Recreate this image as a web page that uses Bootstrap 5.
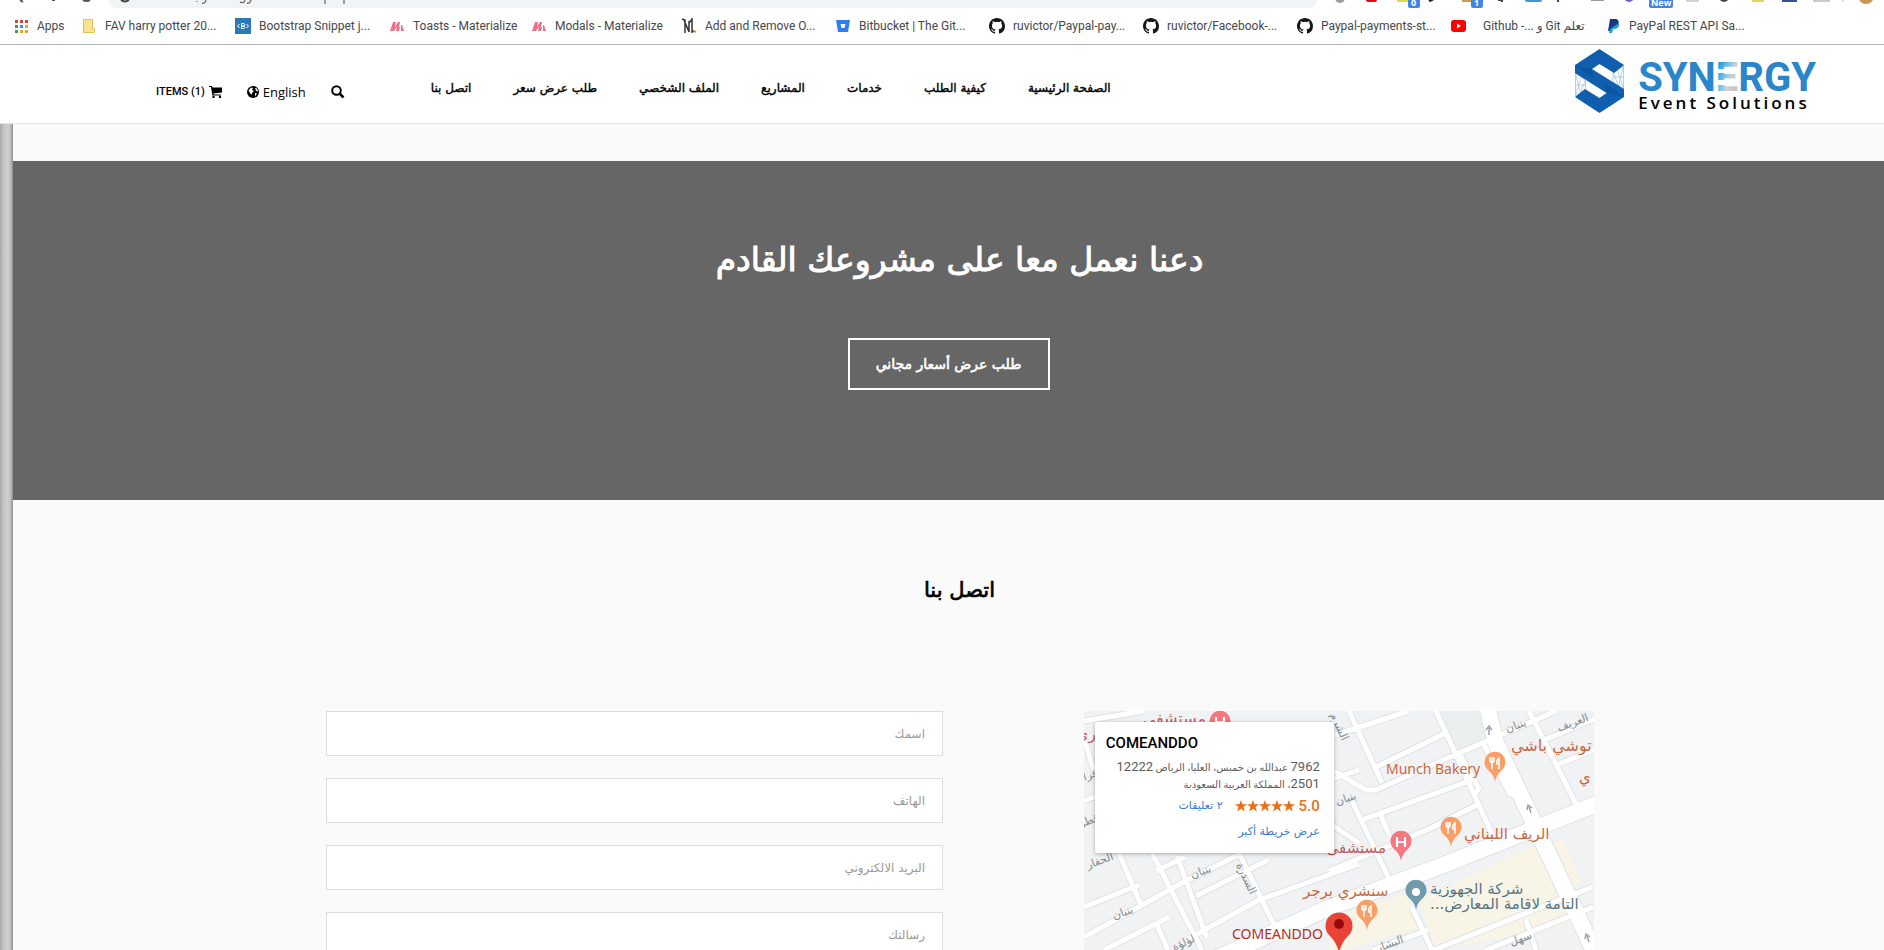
<!DOCTYPE html>
<html lang="ar">
<head>
<meta charset="utf-8">
<meta name="viewport" content="width=device-width, initial-scale=1">
<title>Synergy Event Solutions</title>
<link rel="stylesheet" href="https://cdn.jsdelivr.net/npm/bootstrap@5.3.0/dist/css/bootstrap.min.css">
<script src="https://cdn.jsdelivr.net/npm/bootstrap@5.3.0/dist/js/bootstrap.bundle.min.js"></script>
<style>
  body { background: #fafafa; color: #000; font-family: "DejaVu Sans", sans-serif; }
  a { color: inherit; text-decoration: none; }
  svg { display: block; flex: none; }
  /* browser chrome */
  .toolbar { height: 8px; }
  .omnibox { background: #f1f3f4; border-radius: 0 0 14px 14px; height: 8px; }
  .bookmarks { height: 37px; border-bottom: 1px solid #b4b4b4; font: 12px/16px Roboto, "DejaVu Sans", sans-serif; color: #45484c; padding-left: 13px; }
  .bookmark { width: 154px; flex: none; }
  .bookmark.apps { width: 68px; }
  .bookmark.toasts { width: 142px; }
  .bookmark.modals { width: 150px; }
  .bookmark.paypal { width: 160px; }
  /* site header */
  .site-header { height: 79px; border-bottom: 1px solid #e4e4e4; padding: 0 68px 0 156px; }
  .tools { gap: 25px; padding-top: 16px; font: 13px/20px "Open Sans", sans-serif; }
  .tools .items { font: 500 11px/20px Roboto, sans-serif; }
  .main-nav { gap: 42px; margin-left: 86px; padding-top: 8px; font-size: 12px; line-height: 20px; -webkit-text-stroke: 0.4px #000; }
  .brand { padding-bottom: 6px; gap: 14px; }
  .brand-name { font: 700 40px/30px Roboto, sans-serif; color: #2a86c8; padding-top: 14px; }
  .brand-name .bars { background: linear-gradient(110deg, #1b9ad6 15%, #7cc8ea 45%, #d0d0d0 60%, #bdbdbd); -webkit-background-clip: text; background-clip: text; color: transparent; -webkit-mask-image: linear-gradient(#000 15px, transparent 15px 19px, #000 19px 26px, transparent 26px 31px, #000 31px); mask-image: linear-gradient(#000 15px, transparent 15px 19px, #000 19px 26px, transparent 26px 31px, #000 31px); }
  .brand-tag { font: 600 17px/20px "Open Sans", sans-serif; letter-spacing: 3px; }
  /* page */
  .edge { width: 13px; flex: none; background: linear-gradient(90deg, #a8a8a8, #c4c4c4 25%, #cfcfcf 60%, #c0c0c0 80%, #8c8c8c); }
  .cta { margin-top: 37px; height: 339px; background: #666; color: #fff; }
  .cta h1 { font-size: 33px; line-height: 48px; font-weight: 400; padding: 75px 0 0 22px; margin-bottom: 54px; -webkit-text-stroke: 1px #fff; }
  .cta-btn { width: 202px; height: 52px; border: 2px solid #fff; background: transparent; color: #fff; font-size: 14px; -webkit-text-stroke: 0.6px #fff; }
  .contact h2 { font-size: 21px; line-height: 30px; padding: 75px 0 0 22px; margin-bottom: 106px; font-weight: 400; -webkit-text-stroke: 0.7px #000; }
  .contact-row { max-width: 1290px; padding-left: 22px; }
  .contact-form { width: 48.7%; gap: 22px; }
  .contact-form .form-control { height: 45px; border: 1px solid #dcdcdc; border-radius: 0; padding: 10px 17px; font-size: 12px; line-height: 24px; }
  .contact-form textarea.form-control { height: 160px; }
  .contact-form .form-control::placeholder { color: #999; }
  .map { width: 40.2%; height: 450px; background: #f0f2f4; }
  .place-card { top: 11px; left: 11px; width: 239px; height: 131px; padding: 11px 14px 0 11px; background: #fff; border-radius: 2px; box-shadow: 0 1px 4px rgba(0,0,0,.3); font: 13px/16px Roboto, "DejaVu Sans", sans-serif; color: #5b5b5b; }
  .place-card h3 { font: 500 15px/20px Roboto, sans-serif; color: #000; margin: 0 0 6px; text-align: left; }
  .place-card .address { font-size: 10px; line-height: 16px; text-align: right; white-space: nowrap; }
  .place-card .address span { font-size: 13px; }
  .place-card .rating { color: #e7711b; font: 500 15px/18px Roboto, sans-serif; margin-top: 4px; }
  .place-card a { color: #3a7bd5; font: 11px/16px "DejaVu Sans", sans-serif; }
</style>
</head>
<body>
<div class="d-flex flex-column vh-100 overflow-hidden">
  <div class="bg-white flex-shrink-0">
    <div class="toolbar d-flex overflow-hidden">
      <svg width="109" height="8"><path d="M20 0l3 2M52 0h3M83 0q3 2 7 0" stroke="#555" stroke-width="2" fill="none"/></svg>
      <div class="omnibox flex-grow-1">
        <svg width="300" height="8" fill="none" stroke="#777" stroke-width="1.4"><path d="M12 0q4 3 8 0" stroke="#444" stroke-width="2"/><path d="M88 1v1M97 0q-1 4-4 3M131 2q4 2 5-2M142 0q-1 4-4 3M216 0v4M235 0v4"/></svg>
      </div>
      <svg width="567" height="8" font-family="Open Sans, sans-serif" font-size="9" font-weight="700" fill="#fff">
        <circle cx="23" cy="-2" r="5" fill="#999ca3"/><rect x="49" y="-6" width="11" height="8" rx="2" fill="#d90f0f"/>
        <rect x="80" y="-4" width="12" height="6" fill="#e8d35b"/><rect x="91" y="-4" width="12" height="12" rx="2" fill="#4583e8"/><text x="94" y="6">0</text>
        <path d="M112 1l4-2" stroke="#222" stroke-width="3"/><rect x="145" y="-4" width="12" height="6" fill="#c99b56"/>
        <rect x="154" y="-4" width="12" height="12" rx="2" fill="#4583e8"/><text x="157" y="6">1</text>
        <path d="M181 0h4v2" stroke="#444" stroke-width="2" fill="none"/><rect x="208" y="-4" width="17" height="6" rx="2" fill="#4298d5"/><path d="M241 0v2" stroke="#633" stroke-width="2"/>
        <rect x="274" y="-4" width="13" height="5" fill="#9a9a9a"/><circle cx="312" cy="-3" r="5" fill="#6264ce"/>
        <rect x="332" y="-4" width="24" height="12" rx="2" fill="#4583e8"/><text x="334" y="6">New</text>
        <rect x="370" y="-5" width="11" height="6" fill="#fff" stroke="#aaa"/><circle cx="407" cy="-3" r="4" fill="none" stroke="#444" stroke-width="2"/>
        <rect x="435" y="-4" width="12" height="6" fill="#e5d45d"/><rect x="465" y="-4" width="15" height="6" fill="#34528e"/><rect x="497" y="-5" width="15" height="6" fill="#fff" stroke="#999"/>
        <path d="M526 0v2" stroke="#bbb"/><circle cx="549" cy="-4" r="8" fill="#c39a57"/>
      </svg>
    </div>
    <nav class="bookmarks d-flex align-items-center overflow-hidden text-nowrap" lang="en">
      <a class="bookmark apps d-flex gap-2 align-items-center" href="#"><svg width="16" height="16"><g fill="#d3453c"><path d="M2 2h3v3H2zM7 2h3v3H7zM12 2h3v3h-3z"/></g><path d="M2 7h3v3H2zM2 12h3v3H2z" fill="#2f9e5b"/><path d="M7 7h3v3H7z" fill="#4285f4"/><path d="M12 7h3v3h-3zM7 12h3v3H7zM12 12h3v3h-3z" fill="#dba928"/></svg>Apps</a>
      <a class="bookmark d-flex gap-2 align-items-center" href="#"><svg width="16" height="16"><path d="M2.500 1.500h9v9h2v4h-11z" fill="#fce38d" stroke="#e0bf58"/></svg>FAV harry potter 20...</a>
      <a class="bookmark d-flex gap-2 align-items-center" href="#"><svg width="16" height="16"><path d="M0 0h16v16H0z" fill="#2b7ab8"/><path d="M4.500 6l-2 2 2 2M11.500 6l2 2-2 2M6.500 5.500v5h2.500q2-1.300 0-2.500H6.500h2.500q1.500-1.500 0-2.500z" fill="none" stroke="#fff"/></svg>Bootstrap Snippet j...</a>
      <a class="bookmark toasts d-flex gap-2 align-items-center" href="#"><svg width="16" height="16"><path id="mz" d="M1 13L4 4h3L6 9l3-5h2l-1 5 1 0-1 4H7l1-5-3 5zM12 13l0-6h1l2 6z" fill="#ee6e83"/></svg>Toasts - Materialize</a>
      <a class="bookmark modals d-flex gap-2 align-items-center" href="#"><svg width="16" height="16"><use href="#mz"/></svg>Modals - Materialize</a>
      <a class="bookmark d-flex gap-2 align-items-center" href="#"><svg width="16" height="16"><path d="M1 1l3 1v13M3 2l5 12V3M8 5l3-4v13l2-1" fill="none" stroke="#333" stroke-width="1.500"/><circle cx="14" cy="13.500" r="1.200" fill="#f08a4a"/></svg>Add and Remove O...</a>
      <a class="bookmark d-flex gap-2 align-items-center" href="#"><svg width="16" height="16"><path d="M1 2h14l-2 12H3z" fill="#2c7ef3"/><path d="M5.500 6h5l-1 4h-3z" fill="#fff"/></svg>Bitbucket | The Git...</a>
      <a class="bookmark d-flex gap-2 align-items-center" href="#"><svg width="16" height="16" viewBox="0 0 16 16"><path id="octo" fill="#161616" d="M8 0C3.580 0 0 3.580 0 8c0 3.540 2.290 6.530 5.470 7.590.4.070.55-.17.55-.38 0-.19-.01-.82-.01-1.490-2.010.37-2.530-.49-2.690-.94-.09-.23-.48-.94-.82-1.130-.28-.15-.68-.52-.01-.53.63-.01 1.080.58 1.230.82.72 1.210 1.870.87 2.330.66.070-.52.28-.87.51-1.070-1.780-.2-3.640-.89-3.640-3.950 0-.87.31-1.590.82-2.150-.08-.2-.36-1.020.08-2.120 0 0 .67-.21 2.200.82a7.600 7.600 0 0 1 4 0c1.530-1.040 2.200-.82 2.200-.82.44 1.100.16 1.920.08 2.120.51.56.82 1.270.82 2.150 0 3.070-1.870 3.750-3.650 3.950.29.25.54.73.54 1.480 0 1.070-.01 1.930-.01 2.200 0 .21.15.46.55.38A8 8 0 0 0 16 8c0-4.420-3.580-8-8-8z"/></svg>ruvictor/Paypal-pay...</a>
      <a class="bookmark d-flex gap-2 align-items-center" href="#"><svg width="16" height="16"><use href="#octo"/></svg>ruvictor/Facebook-...</a>
      <a class="bookmark d-flex gap-2 align-items-center" href="#"><svg width="16" height="16"><use href="#octo"/></svg>Paypal-payments-st...</a>
      <a class="bookmark d-flex gap-3 align-items-center" href="#"><svg width="16" height="16"><rect y="2" width="15" height="12" rx="3" fill="#f00"/><path d="M6 5.500v5l4-2.500z" fill="#fff"/></svg><span>Github -... و Git تعلم</span></a>
      <a class="bookmark paypal d-flex gap-2 align-items-center" href="#"><svg width="16" height="16"><path d="M5 1h6q4 1 2 6-2 3-5 3l-1 3H3z" fill="#133a84"/><path d="M14 5q1 6-6 6l-1 4H4l1-4" fill="#1c9fdc"/></svg>PayPal REST API Sa...</a>
    </nav>
  </div>

  <header class="site-header bg-white d-flex flex-shrink-0 align-items-center">
    <div class="tools d-flex align-items-center">
      <a class="items d-flex align-items-center gap-1" href="#">ITEMS (1) <svg width="13" height="12"><path d="M0 0h3l.5 1.500H13v5L4.500 7.500v1H12v1H3.300L2 1H0z"/><circle cx="4.500" cy="11" r="1.200"/><circle cx="11" cy="11" r="1.200"/></svg></a>
      <a class="d-flex align-items-center gap-1" href="#"><svg width="12" height="12"><circle cx="6" cy="6" r="6"/><path d="M1.500 4.500L4 1.500l2 .5-1 2 2 1-2 2 0 2-2-2zM8 2l2 .5 1 3-2-.5zM8 7l2 .5-2 3z" fill="#fff"/></svg>English</a>
      <button type="button" class="btn p-0 border-0 rounded-0" aria-label="Search"><svg width="14" height="14"><circle cx="5.500" cy="5.500" r="4.300" fill="none" stroke="#000" stroke-width="2"/><path d="M9 9l3.500 3.500" stroke="#000" stroke-width="2.500"/></svg></button>
    </div>
    <nav class="main-nav d-flex flex-row-reverse text-nowrap">
      <a href="#">الصفحة الرئيسية</a><a href="#">كيفية الطلب</a><a href="#">خدمات</a><a href="#">المشاريع</a><a href="#">الملف الشخصي</a><a href="#">طلب عرض سعر</a><a href="#">اتصل بنا</a>
    </nav>
    <a class="brand ms-auto d-flex align-items-start" href="#" lang="en">
      <svg width="49" height="64" viewBox="0 0 49 64">
        <g fill="none" stroke="#8fc0e2" stroke-width=".7"><path d="M.5 24v23l10-7V31zM.5 36h10M.5 24l5 20 5-13M.5 47l6-20M48.500 17v23L38 33V24zM48.500 28H38M48.500 17l-5 20-5-13M48.500 40l-6-19"/></g>
        <path d="M24.500 0L49 16 39 24 24.500 15 17 20 49 40v8L24.500 64 0 48l10-8 14.500 9 7-5L0 24v-8z" fill="#0f5fae"/>
        <path d="M0 16l10 8 9 5-2-9zM49 48l-10-8-9-5 2 9z" fill="#0b4a90" opacity=".5"/>
      </svg>
      <div><div class="brand-name">SYN<span class="bars">E</span>RGY</div><div class="brand-tag">Event Solutions</div></div>
    </a>
  </header>

  <div class="d-flex flex-grow-1 overflow-hidden">
    <div class="edge"></div>
    <main class="flex-grow-1" dir="ltr">
      <section class="cta text-center">
        <h1>دعنا نعمل معا على مشروعك القادم</h1>
        <button type="button" class="cta-btn">طلب عرض أسعار مجاني</button>
      </section>
      <section class="contact">
        <h2 class="text-center">اتصل بنا</h2>
        <div class="contact-row mx-auto d-flex justify-content-between">
          <form class="contact-form d-flex flex-column" dir="rtl">
            <input class="form-control" type="text" aria-label="اسمك" placeholder="اسمك">
            <input class="form-control" type="tel" dir="rtl" aria-label="الهاتف" placeholder="الهاتف">
            <input class="form-control" type="email" dir="rtl" aria-label="البريد الالكتروني" placeholder="البريد الالكتروني">
            <textarea class="form-control" aria-label="رسالتك" placeholder="رسالتك"></textarea>
          </form>
          <div class="map position-relative overflow-hidden">
            <svg width="100%" height="450" font-family="DejaVu Sans, sans-serif">
              <defs>
                <path id="pin" d="M0 1Q-1-6-7-11a10.500 10.500 0 1 1 14 0Q1-6 0 1z"/>
                <g id="food"><use href="#pin" fill="#fb9d66"/><path d="M-5-24v4q2 3 4 0v-4M-3-24v12M4-12v-11q-3 2-2 6h2" stroke="#fff" stroke-width="1.500" fill="none"/></g>
                <g id="hospital"><use href="#pin" fill="#f3787f"/><path d="M-4-23v10M4-23v10M-4-18h8" stroke="#fff" stroke-width="2.200"/></g>
                <g id="roads" fill="none" stroke-linejoin="round">
                  <path d="M245 26L325 0M265 0l33 72M292 56l70-34M245 57l37 22 10 0 65-29 115-50M352 0l22 48 34 75M445 0l47 93M458 30l52-22M475 53l35-14M268 90l41 86M278 109l110-40M295 100l10 24M245 160l100-42 48-24M375 42l20 36-5 6M398 30l28 53 12 3M245 69l30-10M0 10L60 0M0 27l12 40M0 90l30-12M245 112l30 20"/>
                  <path d="M35 142l22 52M68 142l50 97M93 145l30 82M0 196l55-22M0 226l98-54 60-30M72 160l29-14M155 142l37 76M112 185l72-36M102 229l73-40 100-36M20 239l65-33M72 212l12 27M328 196l20 43M344 219l-55 20M509 176l-34 13-125 50M509 196l-107 43M442 209l10 30"/>
                </g>
              </defs>
              <path d="M308 163l60-24v8l-60 24zM335 189l120-57 37 80-140 27zM245 209l77-27 16 34-93 28zM468 132l11-4 18 42-11 5z" fill="#f8f4e6"/>
              <path d="M355 0h45l8 28-33 17z" fill="#ebeff0"/>
              <use href="#roads" stroke="#dfe2e5" stroke-width="7"/>
              <path d="M100 262l142-64 120-45 85-34 66-26M403-5l9 37 36 76 64 136" fill="none" stroke="#dfe2e5" stroke-width="18"/>
              <use href="#roads" stroke="#fff" stroke-width="5"/>
              <path d="M100 262l142-64 120-45 85-34 66-26M403-5l9 37 36 76 64 136" fill="none" stroke="#fff" stroke-width="16"/>
              <g stroke="#9aa3ac" stroke-width="1.500" fill="none"><path d="M405 24v-7m-3 2l3-4 3 4M447 102l-2-6m-2 3l1-5 4 3M505 231l-2-6m-2 3l1-5 4 3"/></g>
              <g fill="#85898e" font-size="11" text-anchor="middle">
                <text transform="translate(433 18) rotate(-20)">بنبان</text><text transform="translate(490 15) rotate(-20)">العريف</text>
                <text transform="translate(263 91) rotate(-20)">بنبان</text><text transform="translate(118 164) rotate(-20)">بنبان</text>
                <text transform="translate(40 205) rotate(-20)">بنبان</text><text transform="translate(17 153) rotate(-20)">الحفار</text>
                <text transform="translate(159 169) rotate(65)">السدرة</text><text transform="translate(101 235) rotate(-25)">لؤلؤة</text>
                <text transform="translate(307 236) rotate(-20)">البشار</text><text transform="translate(438 231) rotate(-20)">سهل</text>
                <text transform="translate(6 113) rotate(-20)">قطر</text><text transform="translate(5 68) rotate(-20)">فراد</text><text transform="translate(252 17) rotate(65)">الشرم</text>
              </g>
              <g fill="#c9683f" font-size="15">
                <text x="302" y="63" font-size="14" font-family="Noto Sans, sans-serif">Munch Bakery</text>
                <text x="427" y="40" font-size="16">توشي باشي</text><text x="495" y="71">ي</text>
                <text x="380" y="128">الريف اللبناني</text><text x="219" y="185">سنشري برجر</text>
              </g>
              <g fill="#c35a62" font-size="16" text-anchor="end"><text x="302" y="142" font-size="15">مستشفى</text><text x="122" y="13">مستشفى</text><text x="12" y="28">ري</text></g>
              <g fill="#557585" font-size="15"><text x="346" y="183">شركة الجهوزية</text><text x="346" y="198" direction="rtl" text-anchor="end">التامة لاقامة المعارض...</text></g>
              <use href="#food" x="411" y="70"/><use href="#food" x="367" y="135"/><use href="#food" x="283" y="218"/>
              <use href="#hospital" x="317" y="149"/><use href="#hospital" x="136" y="29"/>
              <use href="#pin" x="332" y="198" fill="#719aaa"/><circle cx="332" cy="181" r="4" fill="#fff"/>
              <text x="148" y="228" font-size="14" font-family="Noto Sans, sans-serif" fill="#b52b25">COMEANDDO</text>
              <path d="M255 242q-2-10-9-17a13.500 13.500 0 1 1 18 0q-7 7-9 17z" fill="#e94335"/><circle cx="255" cy="213" r="5" fill="#960a0a"/>
            </svg>
            <div class="place-card position-absolute text-end">
              <h3>COMEANDDO</h3>
              <div class="address" dir="rtl"><span>7962</span> عبدالله بن خميس، العليا، الرياض <span>12222</span><br><span>2501</span>، المملكة العربية السعودية</div>
              <div class="rating d-flex justify-content-end align-items-center"><a class="me-2 pe-1" href="#" dir="rtl">٢ تعليقات</a>
                <svg class="me-1" width="60" height="12" fill="#e7711b"><path id="star" d="M6 0l1.600 4.200H12L8.500 7l1.300 4.500L6 8.800l-3.800 2.700L3.500 7 0 4.200h4.400z"/><use href="#star" x="12"/><use href="#star" x="24"/><use href="#star" x="36"/><use href="#star" x="48"/></svg>5.0</div>
              <div class="mt-2"><a href="#">عرض خريطة أكبر</a></div>
            </div>
          </div>
        </div>
      </section>
    </main>
  </div>
</div>
</body>
</html>
